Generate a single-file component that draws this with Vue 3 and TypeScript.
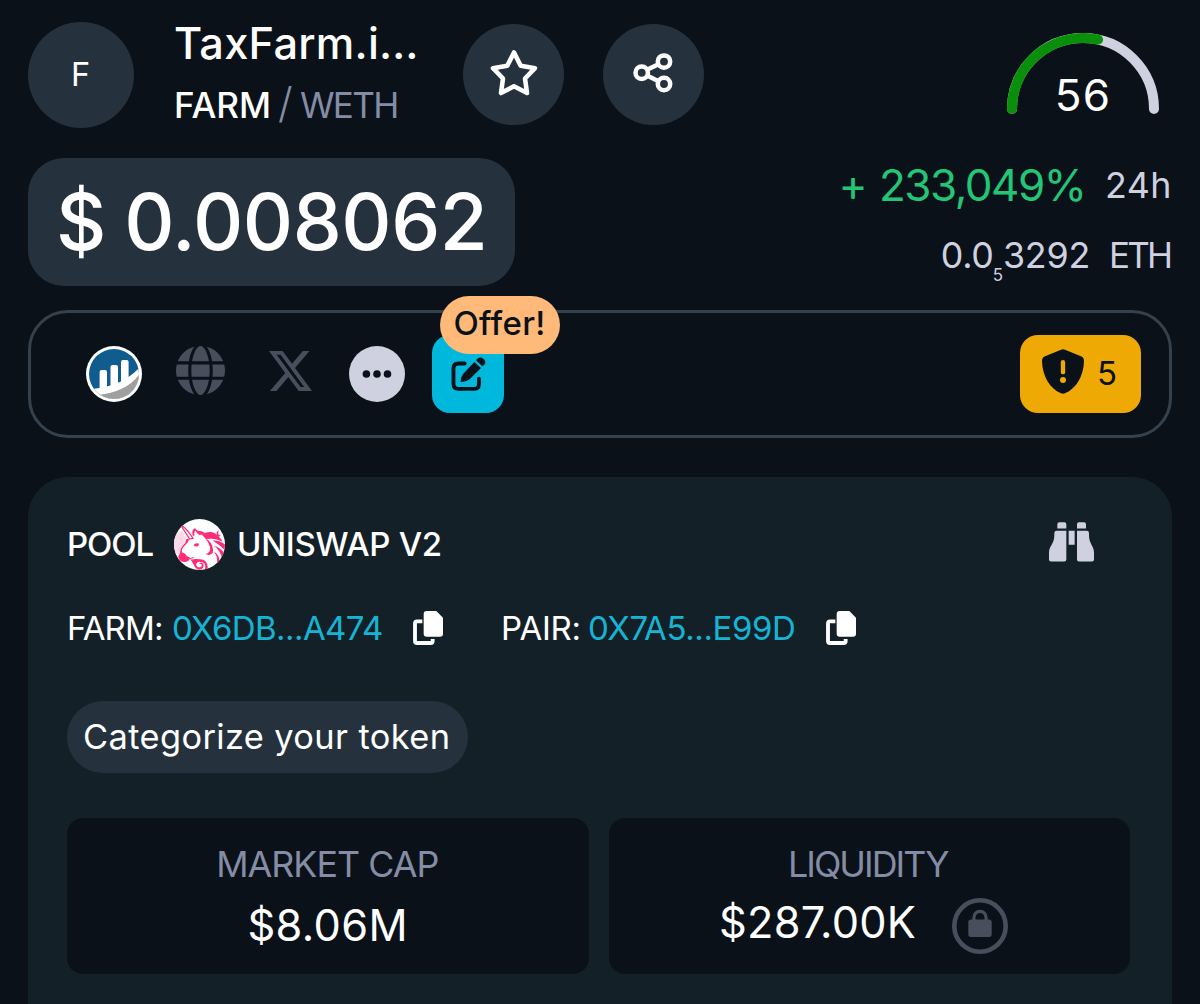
<script setup lang="ts">
interface Address {
  label: string
  value: string
  kind: string
}

const addresses: Address[] = [
  { label: 'FARM:', value: '0X6DB...A474', kind: 'token' },
  { label: 'PAIR:', value: '0X7A5...E99D', kind: 'pair' },
]

const score = 56
const radius = 71
const angle = Math.PI * (1 - (score + 0.8) / 100)
const scoreX = 76 + radius * Math.cos(angle)
const scoreY = 76 - radius * Math.sin(angle)
</script>

<template>
  <main class="page">
    <header class="header">
      <div class="avatar">F</div>
      <div class="names">
        <div class="title">TaxFarm.i…</div>
        <div class="symbols"><b>FARM</b><i>/</i><span>WETH</span></div>
      </div>
      <button class="round" aria-label="Favorite">
        <svg width="48" height="50" viewBox="0 0 48 50" fill="none" stroke="#fff" stroke-width="4.6" stroke-linejoin="round">
          <path d="M24 4.5L30.7 17.8L45 20.2L35 30.5L37 45L24 38.3L11 45L13 30.5L3 20.2L17.3 17.8Z" />
        </svg>
      </button>
      <button class="round share" aria-label="Share">
        <svg width="40" height="40" viewBox="0 0 40 40" fill="none" stroke="#fff" stroke-width="4.5">
          <circle cx="8.7" cy="19.7" r="6.2" /><circle cx="31" cy="8.6" r="6.2" /><circle cx="31" cy="31" r="6.2" />
          <path d="M14 16.8L25.5 11.2M14 22.6L25.5 28.2" />
        </svg>
      </button>
      <div class="gauge">
        <svg width="152" height="84" viewBox="0 0 152 84" fill="none" stroke-width="10" stroke-linecap="round">
          <path d="M5 76A71 71 0 0 1 147 76" stroke="#cfd0e0" />
          <path :d="`M5 76A71 71 0 0 1 ${scoreX} ${scoreY}`" stroke="#098f09" />
        </svg>
        <span class="score">{{ score }}</span>
      </div>
    </header>

    <section class="pricing">
      <div class="price">$ 0.008062</div>
      <div class="stats">
        <div class="change"><strong>+ 233,049%</strong><span>24h</span></div>
        <div class="eth"><span class="amount">0.0<sub>5</sub>3292</span><span class="unit">ETH</span></div>
      </div>
    </section>

    <nav class="links">
      <svg class="tracker" width="56" height="56" viewBox="0 0 56 56">
        <circle cx="28" cy="28" r="28" fill="#fff" />
        <clipPath id="disc"><circle cx="28" cy="28" r="25" /></clipPath>
        <g clip-path="url(#disc)">
          <rect width="56" height="56" fill="#115c8e" />
          <path d="M0 43.500C22 42 40 37 56 19V56H0Z" fill="#fff" />
          <path d="M12 49C32 47 46 40 56 25V56H12Z" fill="#a09e9e" />
          <path d="M13.600 45V26q0-2 2-2H19q2 0 2 2V45ZM24.500 42V21q0-2 2-2H30q2 0 2 2V42ZM35 38V16q0-2 2-2h3.600q2 0 2 2V36Z" fill="#fff" />
        </g>
      </svg>
      <svg class="globe" width="49" height="49" viewBox="0 0 512 512" fill="#484e5c">
        <path d="M352 256c0 22.200-1.200 43.600-3.300 64H163.300c-2.200-20.400-3.300-41.800-3.300-64s1.200-43.600 3.300-64H348.700c2.200 20.400 3.300 41.800 3.300 64zm28.800-64H503.900c5.300 20.500 8.100 41.900 8.100 64s-2.800 43.500-8.100 64H380.800c2.100-20.600 3.200-42 3.200-64s-1.100-43.400-3.200-64zm112.600-32H376.700c-10-63.900-29.800-117.400-55.300-151.600c78.300 20.700 142 77.500 171.900 151.600zm-149.100 0H167.700c6.100-36.400 15.500-68.600 27-94.700c10.500-23.600 22.200-40.700 33.500-51.500C239.400 3.200 248.700 0 256 0s16.600 3.200 27.800 13.800c11.300 10.800 23 27.900 33.500 51.500c11.600 26 20.900 58.200 27 94.700zm-209 0H18.600C48.600 85.900 112.200 29.100 190.600 8.400C165.100 42.600 145.300 96.100 135.300 160zM8.100 192H131.200c-2.100 20.600-3.200 42-3.200 64s1.100 43.400 3.200 64H8.100C2.800 299.500 0 278.100 0 256s2.800-43.500 8.100-64zM194.700 446.600c-11.600-26-20.900-58.200-27-94.600H344.300c-6.100 36.400-15.500 68.600-27 94.600c-10.500 23.600-22.200 40.700-33.500 51.500C272.600 508.800 263.300 512 256 512s-16.600-3.200-27.800-13.800c-11.300-10.800-23-27.900-33.500-51.500zM135.300 352c10 63.900 29.800 117.400 55.300 151.600C112.200 482.900 48.600 426.100 18.600 352H135.300zm358.100 0c-30 74.100-93.600 130.900-171.900 151.600c25.500-34.200 45.200-87.700 55.300-151.600H493.400z" />
      </svg>
      <svg class="x-logo" width="43" height="40" viewBox="26.800 48 460.200 416" preserveAspectRatio="none" fill="#484e5c">
        <path d="M389.200 48h70.600L305.600 224.200 487 464H345L233.700 318.600 106.500 464H35.800L200.700 275.500 26.800 48H172.400L272.900 180.900 389.200 48zM364.400 421.800h39.100L151.100 88h-42L364.400 421.800z" />
      </svg>
      <svg class="more" width="56" height="56" viewBox="0 0 56 56">
        <circle cx="28" cy="28" r="28" fill="#cfd0e0" />
        <g fill="#0a1118"><circle cx="17.400" cy="28" r="3.800" /><circle cx="28" cy="28" r="3.800" /><circle cx="38.500" cy="28" r="3.800" /></g>
      </svg>
      <div class="edit">
        <svg width="36" height="36" viewBox="361 213 108 108">
          <path d="M405 235.500H386q-14.500 0-14.500 14.500V297q0 14.500 14.500 14.500H434q14 0 14-14.500V281" fill="none" stroke="#0a1118" stroke-width="11.500" stroke-linecap="round" />
          <path d="M393 292Q392 277 401 266L434 231L454 249L420 283Q410 291 393 292ZM439 226L445 220Q453 214 461 221L464 224Q470 232 464 239L458 244Z" fill="#0a1118" />
        </svg>
        <span class="offer">Offer!</span>
      </div>
      <div class="audit">
        <svg width="42" height="45" viewBox="187 146 126 135">
          <path d="M244 148Q250 145 256 148L304 168Q313 172 313 182C312 226 290 265 256 279Q250 281.500 244 279C210 265 188 226 187 182Q187 172 196 168Z" fill="#0a1118" />
          <rect x="243.500" y="179" width="13" height="43" rx="6.500" fill="#eea904" /><circle cx="250" cy="239" r="9" fill="#eea904" />
        </svg>
        <span>5</span>
      </div>
    </nav>

    <section class="panel">
      <div class="pool">
        <span class="pool-label">POOL</span>
        <svg width="51" height="51" viewBox="462 148 150 150">
          <clipPath id="coin"><circle cx="537" cy="223" r="75" /></clipPath>
          <circle cx="537" cy="223" r="75" fill="#fff" />
          <g clip-path="url(#coin)" fill="#ff2d78">
            <path d="M480 163Q500 177 518 205L508 207Q496 188 480 163Z" fill="#fff" stroke="#ff2d78" stroke-width="3.500" />
            <path d="M485 181L500 209L497 213Q482 226 480 248L472 252L462 250V200Z" fill="#ffd9e7" />
            <path d="M499 207Q497 219 488 226Q480 235 479 250Q471 258 478 268Q487 278 500 273Q510 270 508 260L501 258Q496 249 485 246Q484 235 494 226Q505 218 507 206Z" />
            <path d="M517 197Q513 177 524 175Q530 184 545 192L538 196Q528 190 525 182Q521 185 522 197Z" />
            <path d="M529 182Q545 183 553 189Q577 181 592 198Q601 205 604 215Q585 204 558 207Q573 217 576 233Q581 249 566 254L555 252Q571 245 568 232Q564 208 529 182Z" />
            <path d="M575 211Q602 210 618 229V247Q600 225 575 211ZM579 226Q603 234 615 256L604 270Q600 241 579 226ZM580 244Q596 253 596 274L588 281Q592 259 580 244Z" />
            <path d="M587 188L593 181L592 193L600 198L589 200Z" />
            <path d="M519 225Q526 217 536 221L533 228Q525 230 519 225Z" />
            <path d="M511 267Q533 264 548 268Q564 276 561 299L553 295Q557 278 544 275Q530 270 527 281Q528 291 539 290Q545 287 543 281L535 279Q545 273 549 282Q550 297 535 297Q525 295 519 281Z" />
            <path d="M507 263Q512 266 520 260" fill="none" stroke="#ff2d78" stroke-width="3" />
          </g>
        </svg>
        <span class="dex">UNISWAP V2</span>
        <svg class="binoculars" width="45" height="40" viewBox="147 155 135 119" fill="#cfd0e0">
          <path d="M172 174V161q0-6 6-6h15q6 0 6 6v13ZM231 174V161q0-6 6-6h15q6 0 6 6v13ZM206 181h18v42H206ZM170 181H199V267q0 6-6 6H153q-6 0-6-6V246C147 226 163 220 163 194V188q0-7 7-7ZM260 181H231V267q0 6 6 6H276q6 0 6-6V246C282 226 267 220 267 194V188q0-7-7-7Z" />
        </svg>
      </div>

      <div class="addresses">
        <div v-for="a in addresses" :key="a.kind" class="address" :class="a.kind">
          <span class="key">{{ a.label }}</span>
          <a>{{ a.value }}</a>
          <svg width="30" height="34" viewBox="38 63 90 102">
            <path d="M66 94H50q-6 0-6 6V153q0 6 6 6H91q6 0 6-6V147" fill="none" stroke="#fff" stroke-width="11.500" />
            <path d="M79 63H108L128 83V131q0 9-9 9H79q-9 0-9-9V72q0-9 9-9Z" fill="#fff" />
          </svg>
        </div>
      </div>

      <div class="pill">Categorize your token</div>

      <div class="cards">
        <div class="card">
          <div class="name cap">MARKET CAP</div>
          <div class="value cap-value">$8.06M</div>
        </div>
        <div class="card">
          <div class="name liq">LIQUIDITY</div>
          <div class="value liq-value">
            <span>$287.00K</span>
            <svg width="56" height="56" viewBox="0 0 56 56" fill="none">
              <circle cx="28" cy="28" r="25.700" stroke="#484e5c" stroke-width="4.600" />
              <rect x="16.300" y="21.500" width="23.400" height="17.500" rx="2.800" fill="#484e5c" />
              <path d="M21.900 23V19.500a6.100 6.100 0 0 1 12.200 0V23" stroke="#484e5c" stroke-width="3.200" />
            </svg>
          </div>
        </div>
      </div>
    </section>
  </main>
</template>

<style>
html,
body {
  margin: 0;
  background: #0a1118;
}
</style>

<style scoped>
.page {
  box-sizing: border-box;
  width: 1200px;
  height: 1004px;
  padding: 22px 28px 0;
  overflow: hidden;
  background: #0a1118;
  color: #fff;
  font-family: Inter, "Liberation Sans", sans-serif;
  white-space: nowrap;
}
svg {
  display: block;
  flex: none;
}
.header {
  display: flex;
  height: 136px;
}
.avatar {
  flex: none;
  width: 106px;
  height: 106px;
  border-radius: 50%;
  background: #25323d;
  font-size: 32.500px;
  line-height: 106px;
  text-align: center;
  text-indent: -1px;
}
.names {
  width: 289px;
  margin-left: 40px;
}
.title {
  font-size: 43.300px;
  font-weight: 500;
  line-height: 43px;
  letter-spacing: 0.260px;
}
.symbols {
  display: flex;
  margin-top: 21px;
  font-size: 35.100px;
  line-height: 38px;
}
.symbols b {
  width: 104px;
  font-weight: 500;
}
.symbols i {
  width: 22px;
  color: #858ca5;
  font-size: 42px;
  font-style: normal;
  font-weight: 300;
  line-height: 33px;
}
.symbols span {
  color: #858ca5;
  letter-spacing: -1.700px;
}
.round {
  display: flex;
  flex: none;
  align-items: center;
  justify-content: center;
  width: 101px;
  height: 101px;
  margin: 2px 0 0;
  padding: 0;
  border: 0;
  border-radius: 50%;
  background: #25323d;
}
.round svg {
  margin: -3px 0 0;
}
.share {
  margin-left: 39px;
}
.share svg {
  margin-right: 2px;
}
.gauge {
  width: 152px;
  margin: 11px 13px 0 auto;
}
.score {
  display: block;
  margin-top: -49px;
  font-size: 44px;
  line-height: 54px;
  text-align: center;
  letter-spacing: 1.200px;
}
.pricing {
  display: flex;
  justify-content: space-between;
  height: 152px;
}
.price {
  box-sizing: border-box;
  width: 487px;
  height: 128px;
  padding-left: 28px;
  border-radius: 36px;
  background: #25323d;
  font-size: 78px;
  font-weight: 500;
  line-height: 127px;
  letter-spacing: -0.500px;
  word-spacing: -2px;
}
.stats {
  color: #cfd0e0;
  font-size: 35.800px;
}
.change,
.eth {
  display: flex;
  justify-content: flex-end;
}
.change {
  line-height: 54px;
}
.change strong {
  margin-right: 19.500px;
  color: #23c577;
  font-size: 44px;
  font-weight: 400;
  letter-spacing: -1.500px;
  word-spacing: 2px;
}
.change span {
  letter-spacing: 0.500px;
}
.eth {
  line-height: 86px;
}
.eth sub {
  position: relative;
  top: 13px;
  margin: 0 0 0 -1px;
  font-size: 17px;
  line-height: 0;
  vertical-align: baseline;
}
.amount {
  margin-right: 19px;
  letter-spacing: -0.200px;
}
.unit {
  margin-right: 2px;
  font-size: 35px;
  letter-spacing: -2.900px;
}
.links {
  box-sizing: border-box;
  display: flex;
  align-items: center;
  height: 128px;
  padding: 0 28px 0 55px;
  border: 3px solid #35414d;
  border-radius: 40px;
}
.globe {
  margin: -7px 44px 0 34px;
}
.x-logo {
  margin: -6px 37px 0 0;
}
.edit {
  position: relative;
  display: flex;
  justify-content: center;
  box-sizing: border-box;
  width: 72px;
  height: 78px;
  margin-left: 27px;
  padding-top: 21px;
  border-radius: 18px;
  background: #00b8dc;
}
.offer {
  position: absolute;
  top: -39px;
  left: 8px;
  width: 120px;
  height: 58px;
  border-radius: 29px;
  background: #ffb978;
  color: #0a1118;
  font-size: 33px;
  font-weight: 500;
  line-height: 55px;
  text-align: center;
  text-indent: -1px;
  letter-spacing: 0.300px;
}
.audit {
  display: flex;
  gap: 13px;
  box-sizing: border-box;
  width: 121px;
  height: 78px;
  margin-left: auto;
  padding: 14px 0 0 22px;
  border-radius: 18px;
  background: #eea904;
  color: #0a1118;
  font-size: 33px;
  line-height: 49px;
}
.panel {
  box-sizing: border-box;
  height: 560px;
  margin-top: 39px;
  padding: 42px 42px 0 39px;
  border-radius: 40px 40px 0 0;
  background: #142028;
}
.pool {
  display: flex;
  align-items: center;
  height: 51px;
  font-size: 33px;
  font-weight: 500;
}
.pool span {
  margin-top: -2px;
}
.pool-label {
  width: 106.500px;
  letter-spacing: -1.100px;
}
.dex {
  margin-left: 12.500px;
  letter-spacing: -0.300px;
}
.binoculars {
  margin: -6px 36px 0 auto;
}
.addresses {
  display: flex;
  height: 34px;
  margin-top: 41px;
  font-size: 33px;
  line-height: 34px;
}
.address {
  display: flex;
}
.token {
  width: 434px;
}
.token .key {
  width: 105px;
  letter-spacing: -0.820px;
}
.token a {
  width: 241px;
  letter-spacing: -0.570px;
}
.pair .key {
  width: 87px;
  letter-spacing: -0.250px;
}
.pair a {
  width: 238px;
  letter-spacing: -0.410px;
}
.address a {
  color: #17b3d3;
}
.pill {
  box-sizing: border-box;
  width: 401px;
  height: 72px;
  margin-top: 56px;
  padding-left: 16px;
  border-radius: 36px;
  background: #25323d;
  font-size: 34.400px;
  line-height: 72px;
  letter-spacing: 0.380px;
}
.cards {
  display: flex;
  gap: 20px;
  margin-top: 45px;
}
.card {
  box-sizing: border-box;
  width: 522px;
  height: 156px;
  padding-top: 26px;
  border-radius: 16px;
  background: #0a1118;
}
.name {
  color: #858ca5;
  font-size: 35.800px;
  line-height: 40px;
  text-align: center;
}
.cap {
  margin-right: 1px;
  letter-spacing: -0.970px;
}
.liq {
  margin-right: 3px;
  letter-spacing: -1.940px;
}
.value {
  font-size: 43.300px;
  font-weight: 400;
}
.cap-value {
  line-height: 82px;
  text-align: center;
  letter-spacing: 0.400px;
}
.liq-value {
  display: flex;
  margin-left: 110.500px;
  line-height: 76px;
}
.liq-value span {
  width: 232.500px;
  letter-spacing: 0.250px;
}
.liq-value svg {
  margin-top: 14px;
}
</style>
